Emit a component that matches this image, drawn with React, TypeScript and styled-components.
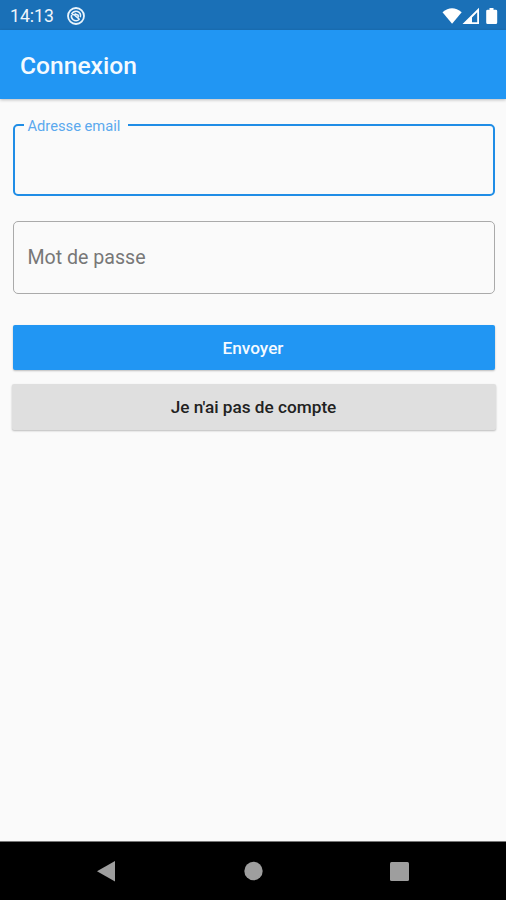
import React from "react";
import styled, { createGlobalStyle } from "styled-components";

const GlobalStyle = createGlobalStyle`
  * { box-sizing: border-box; }
  body { margin: 0; background: #fafafa; font-family: Roboto, "Liberation Sans", sans-serif; }
`;

const Screen = styled.div`
  display: flex;
  flex-direction: column;
  width: 506px;
  height: 900px;
  overflow: hidden;
  background: #fafafa;
`;

const StatusBar = styled.div`
  display: flex;
  align-items: center;
  flex: none;
  height: 30px;
  padding: 2px 8px 0 10px;
  background: #1a70b7;
  color: #eef5fb;
`;

const Clock = styled.span`
  width: 57px;
  font-size: 17.6px;
  line-height: 20px;
`;

const StatusIcons = styled.div`
  display: flex;
  align-items: center;
  margin-left: auto;
`;

const AppBar = styled.header`
  display: flex;
  align-items: center;
  flex: none;
  height: 69px;
  padding: 2px 20px 0;
  background: #2196f3;
  box-shadow: 0 1px 3px rgba(0, 0, 0, 0.25);
`;

const Title = styled.h1`
  margin: 0;
  color: #f4faff;
  font-size: 24.6px;
  font-weight: 500;
  line-height: 30px;
`;

const Form = styled.main`
  display: flex;
  flex-direction: column;
  flex: 1;
  padding: 25px 11.5px 0 12.5px;
`;

const FocusedField = styled.fieldset`
  height: 72px;
  margin: 0 0 25px;
  padding: 0 9px;
  min-width: 0;
  border: 2px solid #1f8de6;
  border-radius: 5px;
`;

const FloatingLabel = styled.legend`
  width: 104px;
  height: 2px;
  padding: 0 0 0 4px;
  color: #5ba9ee;
  font-size: 14.7px;
  line-height: 4px;
  white-space: nowrap;
`;

const Field = styled.div`
  display: flex;
  align-items: center;
  height: 73px;
  margin-bottom: 31px;
  padding: 0 14px;
  border: 1.5px solid #aaa;
  border-radius: 5px;
  color: #777;
  font-size: 19.6px;
`;

const Button = styled.button<{ $primary?: boolean }>`
  display: flex;
  align-items: center;
  justify-content: center;
  height: ${(p) => (p.$primary ? "45px" : "46px")};
  margin: ${(p) => (p.$primary ? "0 0 14px 0" : "0 -1.5px 0 -0.5px")};
  padding: 0 1px 0 0;
  border: 0;
  border-radius: 2px;
  background: ${(p) => (p.$primary ? "#2196f3" : "#dfdfdf")};
  box-shadow: 0 1px 2px rgba(0, 0, 0, 0.25);
  color: ${(p) => (p.$primary ? "#f5faff" : "#222")};
  font: 500 17.2px Roboto, "Liberation Sans", sans-serif;
`;

const NavBar = styled.nav`
  display: grid;
  grid-template-columns: 34px 34px 34px;
  justify-content: center;
  align-items: center;
  column-gap: 112px;
  flex: none;
  height: 59px;
  border-top: 1px solid #777;
  background: #000;
`;

export default function App() {
  return (
    <>
      <GlobalStyle />
      <Screen>
        <StatusBar>
          <Clock>14:13</Clock>
          <svg width="18" height="18" viewBox="0 0 18 18" fill="none" stroke="#e9f4fc">
            <circle cx="9" cy="9" r="8" strokeWidth="1.8" />
            <path d="M4.5 7.2Q6.8 3.5 10.5 4.5Q14.5 6 13.3 10.2M12.4 12.3Q9.4 14.9 6 12.6Q3.7 10.6 4.6 8" strokeWidth="1.5" />
            <path d="M4.8 7.6Q7.5 7.4 8.8 9.3L12.6 12.5M7.6 6.7 11.2 8.2V10.5" strokeWidth="1.5" />
          </svg>
          <StatusIcons>
            <svg width="57" height="18" viewBox="441 6 57 18" fill="#fff">
              <path d="M442.5 11.3Q452 3.2 461.7 11.3L452.1 22.8Z" />
              <path fillRule="evenodd" d="M462.5 23 479 6.8V23ZM472 21.2H477.2V11.2L472 16.5Z" />
              <path d="M489.5 7h4v1.7h2.3q1.4 0 1.4 1.4v11.4q0 1.5-1.4 1.5h-8.2q-1.4 0-1.4-1.5V10.1q0-1.4 1.4-1.4h1.9Z" />
            </svg>
          </StatusIcons>
        </StatusBar>
        <AppBar>
          <Title>Connexion</Title>
        </AppBar>
        <Form>
          <FocusedField>
            <FloatingLabel>Adresse email</FloatingLabel>
          </FocusedField>
          <Field>Mot de passe</Field>
          <Button type="button" $primary>Envoyer</Button>
          <Button type="button">Je n'ai pas de compte</Button>
        </Form>
        <NavBar>
          <svg width="34" height="34" fill="#9e9e9e"><path d="M25 7v20.5L7 17.2Z" /></svg>
          <svg width="34" height="34" fill="#9e9e9e"><circle cx="17.5" cy="17" r="9.2" /></svg>
          <svg width="34" height="34" fill="#9e9e9e"><rect x="8" y="8" width="19" height="19" rx="1.5" /></svg>
        </NavBar>
      </Screen>
    </>
  );
}
